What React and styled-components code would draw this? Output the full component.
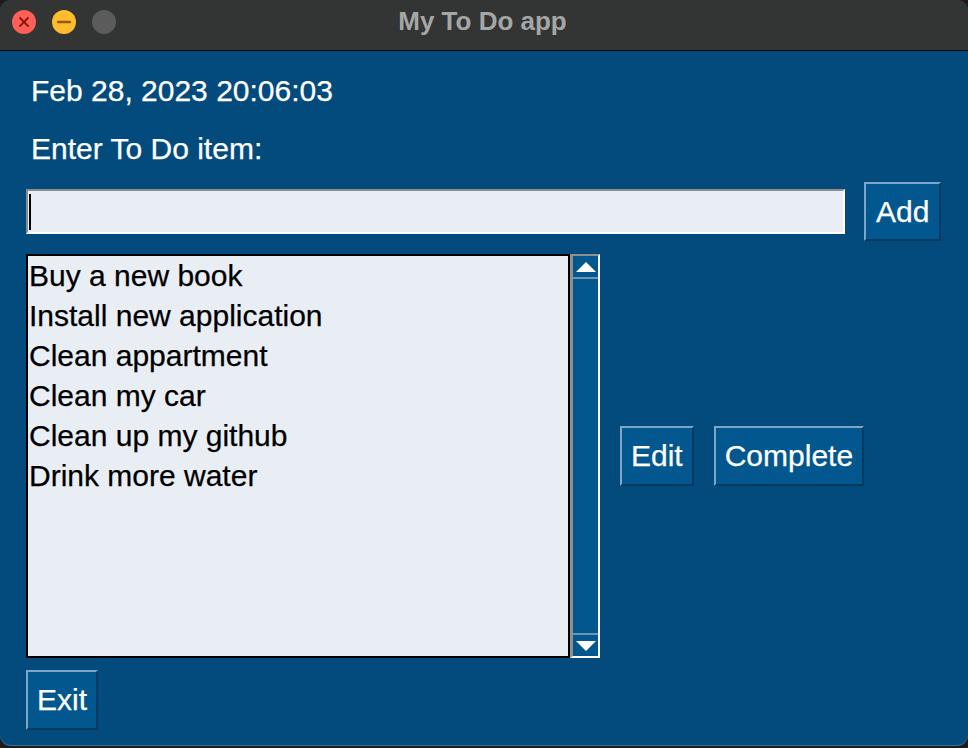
import React from "react";
import styled, { createGlobalStyle } from "styled-components";

const Global = createGlobalStyle`
  html, body { margin: 0; padding: 0; background: #1c1c1c; }
  body { width: 968px; height: 748px; overflow: hidden; font-family: "Liberation Sans", Arial, Helvetica, sans-serif; }
`;

const Window = styled.div`
  width: 968px;
  height: 746px;
  border-radius: 11px;
  overflow: hidden;
  background: #024b7c;
  display: flex;
  flex-direction: column;
  box-shadow: inset 0 -1px 0 #3f6f95;
`;

const TitleBar = styled.div`
  height: 50px;
  flex: none;
  background: #333434;
  border-bottom: 1px solid #0a0a0a;
  position: relative;
  display: flex;
  align-items: center;
  justify-content: center;
`;

const Lights = styled.div`
  position: absolute;
  left: 12px;
  top: 10px;
  display: flex;
  gap: 16px;
`;

const Light = styled.div`
  width: 24px;
  height: 24px;
  border-radius: 50%;
  background: ${(p) => p.$c};
  display: flex;
  align-items: center;
  justify-content: center;
`;

const Title = styled.div`
  font-weight: bold;
  font-size: 26px;
  color: #a5a6a6;
  margin-top: -8px;
  margin-left: -3px;
`;

const Content = styled.div`
  flex: 1;
  display: flex;
  flex-direction: column;
  padding: 22px 26px 0 26px;
`;

const Label = styled.div`
  color: #ffffff;
  font-size: 30px;
  line-height: 36px;
  padding-left: 5px;
  margin-bottom: ${(p) => p.$mb}px;
  -webkit-text-stroke: 0.25px currentColor;
`;

const EntryRow = styled.div`
  display: flex;
  align-items: center;
  gap: 19px;
  height: 59px;
  margin-bottom: 13px;
`;

const Entry = styled.div`
  width: 819px;
  height: 45px;
  box-sizing: border-box;
  background: #e8eef4;
  border-top: 2px solid #8a8c8e;
  border-left: 2px solid #8a8c8e;
  border-right: 2px solid #ffffff;
  border-bottom: 2px solid #ffffff;
  display: flex;
  align-items: center;
  padding-left: 1px;
`;

const Caret = styled.span`
  width: 2px;
  height: 36px;
  background: #000;
`;

const Button = styled.div`
  box-sizing: border-box;
  height: ${(p) => p.$h || 60}px;
  padding: 0 ${(p) => p.$px || 10}px;
  background: #03578f;
  border-top: 2px solid #7ea6c8;
  border-left: 2px solid #7ea6c8;
  border-right: 2px solid #023a61;
  border-bottom: 2px solid #023a61;
  color: #ffffff;
  font-size: 30px;
  -webkit-text-stroke: 0.25px currentColor;
  display: flex;
  align-items: center;
  justify-content: center;
  flex: none;
`;

const ExitRow = styled.div`
  display: flex;
`;

const MainRow = styled.div`
  display: flex;
  align-items: center;
  height: 404px;
  margin-bottom: 12px;
`;

const ListBox = styled.div`
  width: 544px;
  height: 404px;
  box-sizing: border-box;
  border: 2px solid #000;
  background: #e8eef4;
  padding: 0 0 0 1px;
`;

const Item = styled.div`
  font-size: 30px;
  line-height: 40px;
  color: #000;
  white-space: nowrap;
  -webkit-text-stroke: 0.25px currentColor;
`;

const ScrollBar = styled.div`
  width: 30px;
  height: 404px;
  box-sizing: border-box;
  border-top: 2px solid #8e9092;
  border-left: 3px solid #8e9092;
  border-right: 2px solid #ffffff;
  border-bottom: 2px solid #ffffff;
  background: #03578f;
  display: flex;
  flex-direction: column;
  justify-content: space-between;
  margin-right: 20px;
`;

const Arrow = styled.div`
  height: 21px;
  display: flex;
  align-items: center;
  justify-content: center;
  border-${(p) => (p.$up ? "bottom" : "top")}: 2px solid #6f93b3;
`;

const Side = styled.div`
  display: flex;
  gap: 20px;
`;

export default function App() {
  const items = [
    "Buy a new book",
    "Install new application",
    "Clean appartment",
    "Clean my car",
    "Clean up my github",
    "Drink more water",
  ];
  return (
    <>
      <Global />
      <Window>
        <TitleBar>
          <Lights>
            <Light $c="#fe5f57">
              <svg width="12" height="12" viewBox="0 0 12 12">
                <path d="M2 2 L10 10 M10 2 L2 10" stroke="#8c1a10" strokeWidth="2" strokeLinecap="round" />
              </svg>
            </Light>
            <Light $c="#febc2e">
              <svg width="14" height="4" viewBox="0 0 14 4">
                <path d="M1 2 H13" stroke="#985700" strokeWidth="2.5" strokeLinecap="round" />
              </svg>
            </Light>
            <Light $c="#5b5b5b" />
          </Lights>
          <Title>My To Do app</Title>
        </TitleBar>
        <Content>
          <Label $mb={22}>Feb 28, 2023 20:06:03</Label>
          <Label $mb={15}>Enter To Do item:</Label>
          <EntryRow>
            <Entry>
              <Caret />
            </Entry>
            <Button $h={59}>Add</Button>
          </EntryRow>
          <MainRow>
            <ListBox>
              {items.map((t) => (
                <Item key={t}>{t}</Item>
              ))}
            </ListBox>
            <ScrollBar>
              <Arrow $up>
                <svg width="20" height="10" viewBox="0 0 20 10">
                  <path d="M0 10 L10 0 L20 10 Z" fill="#fff" />
                </svg>
              </Arrow>
              <Arrow>
                <svg width="20" height="10" viewBox="0 0 20 10">
                  <path d="M0 0 L10 10 L20 0 Z" fill="#fff" />
                </svg>
              </Arrow>
            </ScrollBar>
            <Side>
              <Button $px={9}>Edit</Button>
              <Button $px={9}>Complete</Button>
            </Side>
          </MainRow>
          <ExitRow>
            <Button $px={9}>Exit</Button>
          </ExitRow>
        </Content>
      </Window>
    </>
  );
}
